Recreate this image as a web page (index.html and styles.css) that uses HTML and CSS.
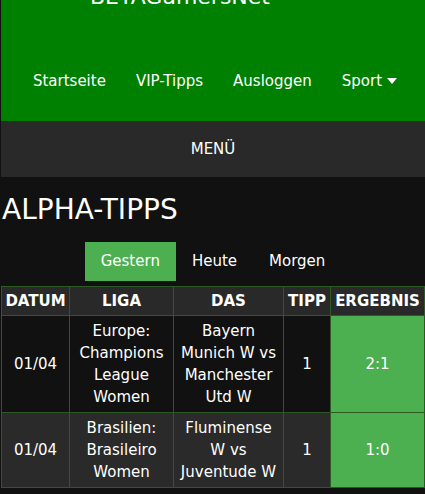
FILE: index.html
```html
<!DOCTYPE html>
<html lang="de">
<head>
<meta charset="utf-8">
<title>Alpha-Tipps</title>
<link rel="stylesheet" href="styles.css">
</head>
<body>
<div class="page">
  <header class="top">
    <div class="logo">BETAGamersNet</div>
    <nav class="nav">
      <a class="nav-item" href="#">Startseite</a>
      <a class="nav-item" href="#">VIP-Tipps</a>
      <a class="nav-item" href="#">Ausloggen</a>
      <a class="nav-item" href="#">Sport <span class="caret"></span></a>
    </nav>
  </header>
  <div class="menu-bar">MENÜ</div>
  <h1 class="title">ALPHA-TIPPS</h1>
  <div class="tabs">
    <a class="tab active" href="#">Gestern</a>
    <a class="tab" href="#">Heute</a>
    <a class="tab" href="#">Morgen</a>
  </div>
  <table class="tips">
    <colgroup>
      <col class="c-date"><col class="c-league"><col class="c-match"><col class="c-tip"><col class="c-result">
    </colgroup>
    <thead>
      <tr><th>DATUM</th><th>LIGA</th><th>DAS</th><th>TIPP</th><th>ERGEBNIS</th></tr>
    </thead>
    <tbody>
      <tr class="odd">
        <td>01/04</td>
        <td>Europe: Champions League Women</td>
        <td>Bayern Munich W vs Manchester Utd W</td>
        <td>1</td>
        <td class="win">2:1</td>
      </tr>
      <tr class="even">
        <td>01/04</td>
        <td>Brasilien: Brasileiro Women</td>
        <td>Fluminense W vs Juventude W</td>
        <td>1</td>
        <td class="win">1:0</td>
      </tr>
    </tbody>
  </table>
</div>
</body>
</html>
```
FILE: styles.css
```css
html, body {
  margin: 0;
  padding: 0;
  background: #111111;
  color: #ffffff;
  font-family: "DejaVu Sans", Verdana, sans-serif;
  font-size: 15px;
}
.page {
  padding-left: 1px;
  overflow: hidden;
  height: 494px;
}
a { color: #ffffff; text-decoration: none; }

.top {
  background: #008000;
  height: 121px;
  display: flex;
  flex-direction: column;
  align-items: center;
}
.logo {
  font-size: 22px;
  line-height: 30px;
  margin-top: -18px;
  margin-right: 66px;
}
.nav {
  display: flex;
  justify-content: center;
  margin-top: 59px;
  line-height: 20px;
  margin-right: -4px;
}
.nav-item {
  padding: 0 15px;
  display: flex;
  align-items: center;
}
.caret {
  display: inline-block;
  width: 0;
  height: 0;
  margin-left: 5px;
  border-left: 5px solid transparent;
  border-right: 5px solid transparent;
  border-top: 6px solid #ffffff;
}

.menu-bar {
  background: #292929;
  height: 56px;
  display: flex;
  align-items: center;
  justify-content: center;
}

.title {
  margin: 15px 0 14px 1px;
  font-weight: normal;
  font-size: 28px;
  line-height: 36px;
}

.tabs {
  display: flex;
  justify-content: center;
  margin-bottom: 5px;
}
.tab {
  padding: 0 16px;
  line-height: 39px;
}
.tab.active { background: #4caf50; }

.tips {
  border-collapse: collapse;
  table-layout: fixed;
  width: 423px;
  text-align: center;
}
.c-date { width: 68px; }
.c-league { width: 104px; }
.c-match { width: 110px; }
.c-tip { width: 47px; }
.c-result { width: 94px; }
.tips th, .tips td {
  border: 1px solid #2d5a22;
}
.tips th {
  background: #292929;
  font-size: 15px;
  font-weight: bold;
  line-height: 20px;
  padding: 4px 0;
}
.tips td {
  line-height: 22px;
  padding: 4px 4px;
}
.tips .odd td { background: #111111; }
.tips .even td { background: #2a2a2a; }
.tips td.win { background: #4caf50; }
```
